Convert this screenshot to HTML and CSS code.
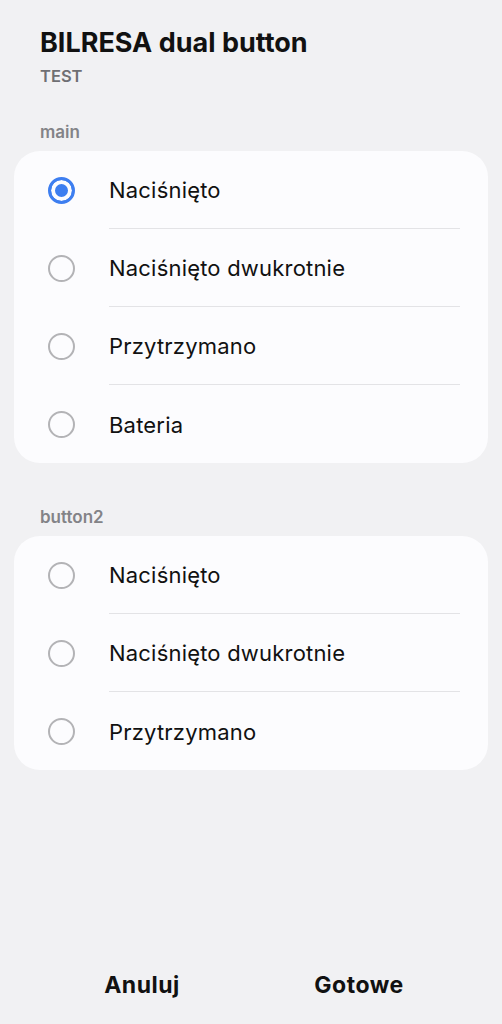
FILE: index.html
```html
<!DOCTYPE html>
<html lang="pl">
<head>
  <meta charset="UTF-8">
  <meta name="viewport" content="width=device-width, initial-scale=1.0">
  <title>BILRESA dual button</title>
  <link rel="stylesheet" href="styles.css">
</head>
<body>

  <div class="sheet">
    <div class="header">
      <h1>BILRESA dual button</h1>
      <div class="subtitle">TEST</div>
    </div>

    <div class="group first">
      <div class="group-label">main</div>
      <ul class="card">
        <li class="option selected"><span class="radio"></span><span class="text">Naciśnięto</span></li>
        <li class="option"><span class="radio"></span><span class="text">Naciśnięto dwukrotnie</span></li>
        <li class="option"><span class="radio"></span><span class="text">Przytrzymano</span></li>
        <li class="option"><span class="radio"></span><span class="text">Bateria</span></li>
      </ul>
    </div>

    <div class="group">
      <div class="group-label">button2</div>
      <ul class="card">
        <li class="option"><span class="radio"></span><span class="text">Naciśnięto</span></li>
        <li class="option"><span class="radio"></span><span class="text">Naciśnięto dwukrotnie</span></li>
        <li class="option"><span class="radio"></span><span class="text">Przytrzymano</span></li>
      </ul>
    </div>

    <div class="actions">
      <button>Anuluj</button>
      <button>Gotowe</button>
    </div>
  </div>

</body>
</html>
```

FILE: styles.css
```css
html,
body {
  margin: 0;
  height: 100%;
}

body {
  background-color: #f1f1f3;
  font-family: Inter, Roboto, "Noto Sans", sans-serif;
  color: #111;
}

.sheet {
  display: flex;
  flex-direction: column;
  height: 100%;
  box-sizing: border-box;
  padding: 0 14px;
}

.header {
  padding: 27px 26px 0;
}

h1 {
  margin: 0;
  font-size: 27px;
  font-weight: 700;
  line-height: 32px;
}

.subtitle {
  margin-top: 7px;
  font-size: 16.5px;
  font-weight: 600;
  color: #6f6f73;
  line-height: 20px;
}

.group-label {
  padding: 0 26px;
  font-size: 17px;
  font-weight: 600;
  color: #838387;
  line-height: 20px;
  margin-top: 44px;
  margin-bottom: 9px;
}

.group.first .group-label {
  margin-top: 36px;
}

.card {
  list-style-type: none;
  margin: 0;
  padding: 0;
  background-color: #fcfcfe;
  border-radius: 26px;
}

.option {
  display: flex;
  align-items: center;
  height: 78px;
  padding-left: 34px;
}

.radio {
  width: 23px;
  height: 23px;
  border: 2px solid #b3b3b6;
  border-radius: 50%;
  flex-shrink: 0;
  margin-right: 34px;
}

.selected .radio {
  border: 3px solid #3d7ef0;
  width: 21px;
  height: 21px;
  background-color: #3d7ef0;
  box-shadow: inset 0 0 0 4px #fcfcfe;
}

.text {
  flex: 1;
  height: 100%;
  display: flex;
  align-items: center;
  font-size: 22px;
  letter-spacing: 0.2px;
  margin-right: 28px;
  border-bottom: 1px solid #e3e3e6;
  box-sizing: border-box;
  padding-top: 1px;
}

.option:last-child .text {
  border-bottom: none;
}

.actions {
  margin-top: auto;
  display: flex;
  gap: 17px;
  padding: 0 0 21px 28px;
}

button {
  width: 200px;
  height: 36px;
  padding: 0;
  border: none;
  background: none;
  font-family: Inter, Roboto, sans-serif;
  font-size: 23px;
  font-weight: 700;
  letter-spacing: 0.5px;
  color: #111;
  cursor: pointer;
}
```
